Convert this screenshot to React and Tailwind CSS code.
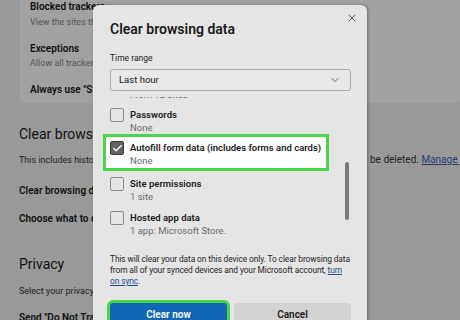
import React from 'react';
import { X, ChevronDown, Check } from 'lucide-react';

const font = { fontFamily: 'Roboto, "Open Sans", sans-serif' };

const items = [
  { title: 'Cookies and other site data', sub: 'From 12 sites' },
  { title: 'Passwords', sub: 'None' },
  { title: 'Autofill form data (includes forms and cards)', sub: 'None', checked: true },
  { title: 'Site permissions', sub: '1 site' },
  { title: 'Hosted app data', sub: '1 app: Microsoft Store.' },
];

const Checkbox = ({ checked }) => (
  <div
    className={`w-[14px] h-[14px] shrink-0 rounded-[2px] border flex items-center justify-center ${
      checked ? 'bg-[#626262] border-[#3a3a3a]' : 'bg-[#e6e6e6] border-[#8c8c8c]'
    }`}
  >
    {checked && <Check size={11} strokeWidth={3} className="text-white" />}
  </div>
);

const Row = ({ item }) => (
  <div className="flex gap-[6px]">
    <Checkbox checked={item.checked} />
    <div className="flex flex-col">
      <span className="h-[14px] leading-[14px] text-[9.5px] font-semibold text-[#1a1a1a] whitespace-nowrap">
        {item.title}
      </span>
      <span className="h-[12px] leading-[12px] text-[9.5px] text-[#6b6b6b]">{item.sub}</span>
    </div>
  </div>
);

const App = () => {
  return (
    <div className="relative w-[460px] h-[320px] overflow-hidden bg-[#999999]" style={font}>
      {/* dimmed settings page */}
      <div className="ml-[20px] pl-[10px] pb-[6px] bg-[#a1a1a1] rounded-b-[6px] whitespace-nowrap">
        <div className="h-[14px] leading-[14px] text-[10px] font-semibold text-[#111]">Blocked trackers</div>
        <div className="mt-[1px] h-[14px] leading-[14px] text-[9px] text-[#555]">View the sites that we've blocked from tracking you</div>
        <div className="mt-[13px] h-[14px] leading-[14px] text-[10px] font-semibold text-[#111]">Exceptions</div>
        <div className="h-[14px] leading-[14px] text-[9px] text-[#555]">Allow all trackers on sites you choose</div>
        <div className="mt-[13px] h-[14px] leading-[14px] text-[10px] font-semibold text-[#111]">Always use "Strict" tracking prevention when browsing InPrivate</div>
      </div>

      <div className="pl-[19px] whitespace-nowrap text-[#111]">
        <div className="mt-[20px] h-[22px] leading-[22px] text-[14px]">Clear browsing data</div>
        <div className="mt-[8px] h-[14px] leading-[14px] flex text-[9px] text-[#222]">
          <span className="w-[351px] shrink-0 overflow-hidden">This includes history, passwords, cookies, and more. Only data from this profile will</span>
          <span className="text-[10px]">
            be deleted. <span className="text-[#1f3f6e] underline">Manage your data</span>
          </span>
        </div>
        <div className="mt-[17px] h-[14px] leading-[14px] text-[10px] font-semibold">Clear browsing data now</div>
        <div className="mt-[14px] h-[14px] leading-[14px] text-[10px] font-semibold">Choose what to clear every time you close the browser</div>
        <div className="mt-[27px] h-[22px] leading-[22px] text-[14px]">Privacy</div>
        <div className="mt-[9px] h-[14px] leading-[14px] text-[9px] text-[#222]">Select your privacy settings for Microsoft Edge.</div>
        <div className="mt-[13px] h-[14px] leading-[14px] text-[10px] font-semibold">Send "Do Not Track" requests</div>
      </div>

      {/* dialog */}
      <div className="absolute left-[93px] top-[5px] w-[274px] h-[340px] rounded-[6px] bg-[#e5e5e5] shadow-[1px_0_3px_rgba(0,0,0,0.35)] pt-[13px] pl-[17px] pr-[16px]">
        <button className="absolute right-[8px] top-[6px] w-[14px] h-[14px] flex items-center justify-center text-[#333]">
          <X size={12} strokeWidth={1.5} />
        </button>
        <div className="h-[22px] leading-[22px] text-[14px] font-semibold text-[#1a1a1a]">Clear browsing data</div>
        <div className="mt-[11px] h-[14px] leading-[14px] text-[8.5px] text-[#222]">Time range</div>
        <div className="mt-[4px] h-[22px] rounded-[3px] border border-[#ababab] bg-[#e8e8e8] flex items-center justify-between pl-[8px] pr-[9px]">
          <span className="text-[9.5px] text-[#1a1a1a]">Last hour</span>
          <ChevronDown size={12} strokeWidth={1.5} className="text-[#444]" />
        </div>

        <div className="relative mt-[6px] -mx-[7px] px-[7px] h-[146px] overflow-hidden">
          <div className="-mt-[22px]">
            <Row item={items[0]} />
          </div>
          <div className="mt-[7px]">
            <Row item={items[1]} />
          </div>
          <div className="-ml-[7px] w-[226px] border-[3px] border-[#49d64a] bg-white pl-[4px] pt-[4px] pb-[1px]">
            <Row item={items[2]} />
          </div>
          <div className="mt-[6px]">
            <Row item={items[3]} />
          </div>
          <div className="mt-[8px]">
            <Row item={items[4]} />
          </div>
          <div className="absolute right-[9px] top-[65px] w-[4px] h-[58px] rounded-full bg-[#7a7a7a]" />
        </div>

        <p className="mt-[11px] text-[8.4px] leading-[11px] tracking-[-0.1px] text-[#1f1f1f]">
          This will clear your data on this device only. To clear browsing data from all of your synced devices and your Microsoft account,{' '}
          <span className="text-[#1d4f91] underline">turn on sync</span>.
        </p>

        <div className="mt-[16px] grid grid-cols-2 gap-[7px]">
          <button className="h-[22px] rounded-[3px] bg-[#1266b6] text-white text-[10px] font-semibold ring-[3px] ring-[#49d64a]">
            Clear now
          </button>
          <button className="h-[22px] rounded-[3px] bg-[#d3d3d3] text-[#1a1a1a] text-[10px] font-semibold">Cancel</button>
        </div>
      </div>
    </div>
  );
};

export default App;
